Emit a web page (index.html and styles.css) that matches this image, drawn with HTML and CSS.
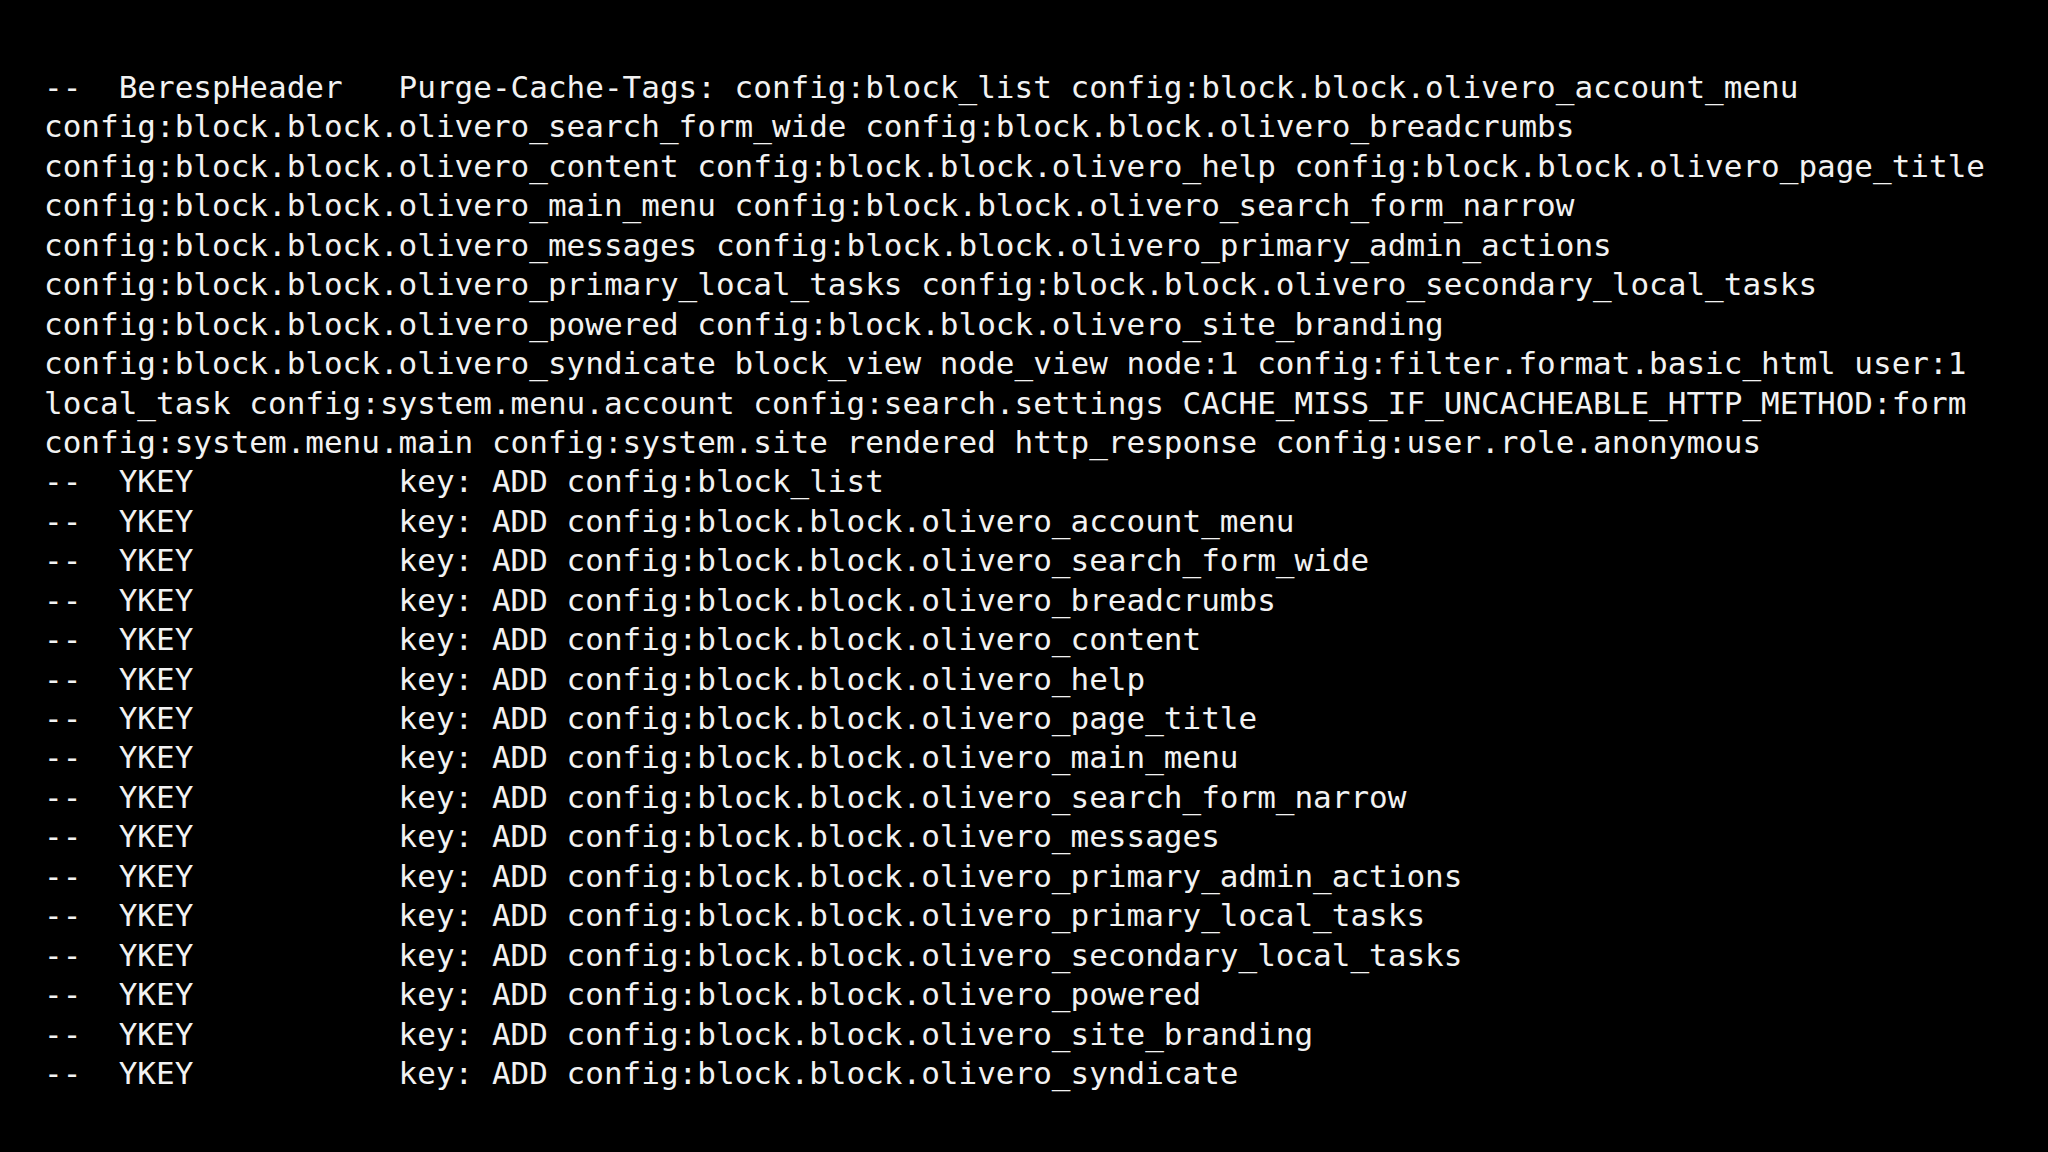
FILE: index.html
```html
<!DOCTYPE html>
<html lang="en">
<head>
  <meta charset="UTF-8">
  <title>varnishlog - Purge-Cache-Tags</title>
  <link rel="stylesheet" href="styles.css">
</head>
<body>
  <div class="terminal">
<pre class="log">--  BerespHeader   Purge-Cache-Tags: config:block_list config:block.block.olivero_account_menu
config:block.block.olivero_search_form_wide config:block.block.olivero_breadcrumbs
config:block.block.olivero_content config:block.block.olivero_help config:block.block.olivero_page_title
config:block.block.olivero_main_menu config:block.block.olivero_search_form_narrow
config:block.block.olivero_messages config:block.block.olivero_primary_admin_actions
config:block.block.olivero_primary_local_tasks config:block.block.olivero_secondary_local_tasks
config:block.block.olivero_powered config:block.block.olivero_site_branding
config:block.block.olivero_syndicate block_view node_view node:1 config:filter.format.basic_html user:1
local_task config:system.menu.account config:search.settings CACHE_MISS_IF_UNCACHEABLE_HTTP_METHOD:form
config:system.menu.main config:system.site rendered http_response config:user.role.anonymous
--  YKEY           key: ADD config:block_list
--  YKEY           key: ADD config:block.block.olivero_account_menu
--  YKEY           key: ADD config:block.block.olivero_search_form_wide
--  YKEY           key: ADD config:block.block.olivero_breadcrumbs
--  YKEY           key: ADD config:block.block.olivero_content
--  YKEY           key: ADD config:block.block.olivero_help
--  YKEY           key: ADD config:block.block.olivero_page_title
--  YKEY           key: ADD config:block.block.olivero_main_menu
--  YKEY           key: ADD config:block.block.olivero_search_form_narrow
--  YKEY           key: ADD config:block.block.olivero_messages
--  YKEY           key: ADD config:block.block.olivero_primary_admin_actions
--  YKEY           key: ADD config:block.block.olivero_primary_local_tasks
--  YKEY           key: ADD config:block.block.olivero_secondary_local_tasks
--  YKEY           key: ADD config:block.block.olivero_powered
--  YKEY           key: ADD config:block.block.olivero_site_branding
--  YKEY           key: ADD config:block.block.olivero_syndicate</pre>
  </div>
</body>
</html>
```

FILE: styles.css
```css
* { margin: 0; padding: 0; box-sizing: border-box; }
html, body { height: 100%; width: 100%; overflow: hidden; }
body { background: #000; color: #f2f2f2; }
.terminal { padding: 68px 0 0 44px; }
.log {
  font-family: 'DejaVu Sans Mono', 'Liberation Mono', monospace;
  font-size: 31px;
  line-height: 39.44px;
  white-space: pre;
}
```
